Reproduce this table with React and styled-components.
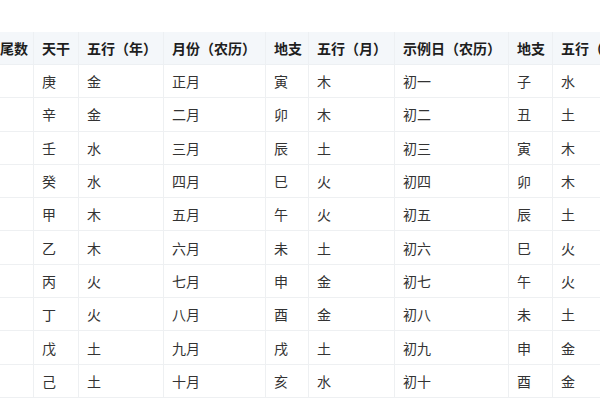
import React from 'react';
import styled, { createGlobalStyle } from 'styled-components';

const GlobalStyle = createGlobalStyle`
  html, body {
    margin: 0;
    padding: 0;
    background: #ffffff;
    overflow: hidden;
  }
  body {
    font-family: "Noto Sans CJK SC", "Noto Sans", sans-serif;
  }
`;

const Page = styled.div`
  width: 600px;
  height: 400px;
  overflow: hidden;
  padding-top: 32px;
  box-sizing: border-box;
`;

const Table = styled.table`
  border-collapse: collapse;
  table-layout: fixed;
  width: 680px;
  margin-left: -37px;
  font-size: 14px;
  color: #333333;
`;

const HeadCell = styled.th`
  height: 32px;
  padding: 0 0 0 8px;
  text-align: left;
  font-weight: 700;
  color: #1e1e1e;
  background: #f4f7fa;
  border: 1px solid #edf0f3;
  border-top: none;
  white-space: nowrap;
  overflow: hidden;
`;

const Row = styled.tr`
  height: 33.3px;
`;

const Cell = styled.td`
  padding: 0 0 0 8px;
  border: 1px solid #eef0f2;
  white-space: nowrap;
  font-weight: 400;
`;

const widths = [70, 45, 85, 102, 43, 86, 114, 44, 91];
const headers = ['年份尾数', '天干', '五行（年）', '月份（农历）', '地支', '五行（月）', '示例日（农历）', '地支', '五行（日）'];

const rows = [
  ['', '庚', '金', '正月', '寅', '木', '初一', '子', '水'],
  ['', '辛', '金', '二月', '卯', '木', '初二', '丑', '土'],
  ['', '壬', '水', '三月', '辰', '土', '初三', '寅', '木'],
  ['', '癸', '水', '四月', '巳', '火', '初四', '卯', '木'],
  ['', '甲', '木', '五月', '午', '火', '初五', '辰', '土'],
  ['', '乙', '木', '六月', '未', '土', '初六', '巳', '火'],
  ['', '丙', '火', '七月', '申', '金', '初七', '午', '火'],
  ['', '丁', '火', '八月', '酉', '金', '初八', '未', '土'],
  ['', '戊', '土', '九月', '戌', '土', '初九', '申', '金'],
  ['', '己', '土', '十月', '亥', '水', '初十', '酉', '金'],
];

export default function App() {
  return (
    <>
      <GlobalStyle />
      <Page>
        <Table>
          <colgroup>
            {widths.map((w, i) => (
              <col key={i} style={{ width: w }} />
            ))}
          </colgroup>
          <thead>
            <tr>
              {headers.map((h, i) => (
                <HeadCell key={i}>{h}</HeadCell>
              ))}
            </tr>
          </thead>
          <tbody>
            {rows.map((r, i) => (
              <Row key={i}>
                {r.map((c, j) => (
                  <Cell key={j}>{c}</Cell>
                ))}
              </Row>
            ))}
          </tbody>
        </Table>
      </Page>
    </>
  );
}
